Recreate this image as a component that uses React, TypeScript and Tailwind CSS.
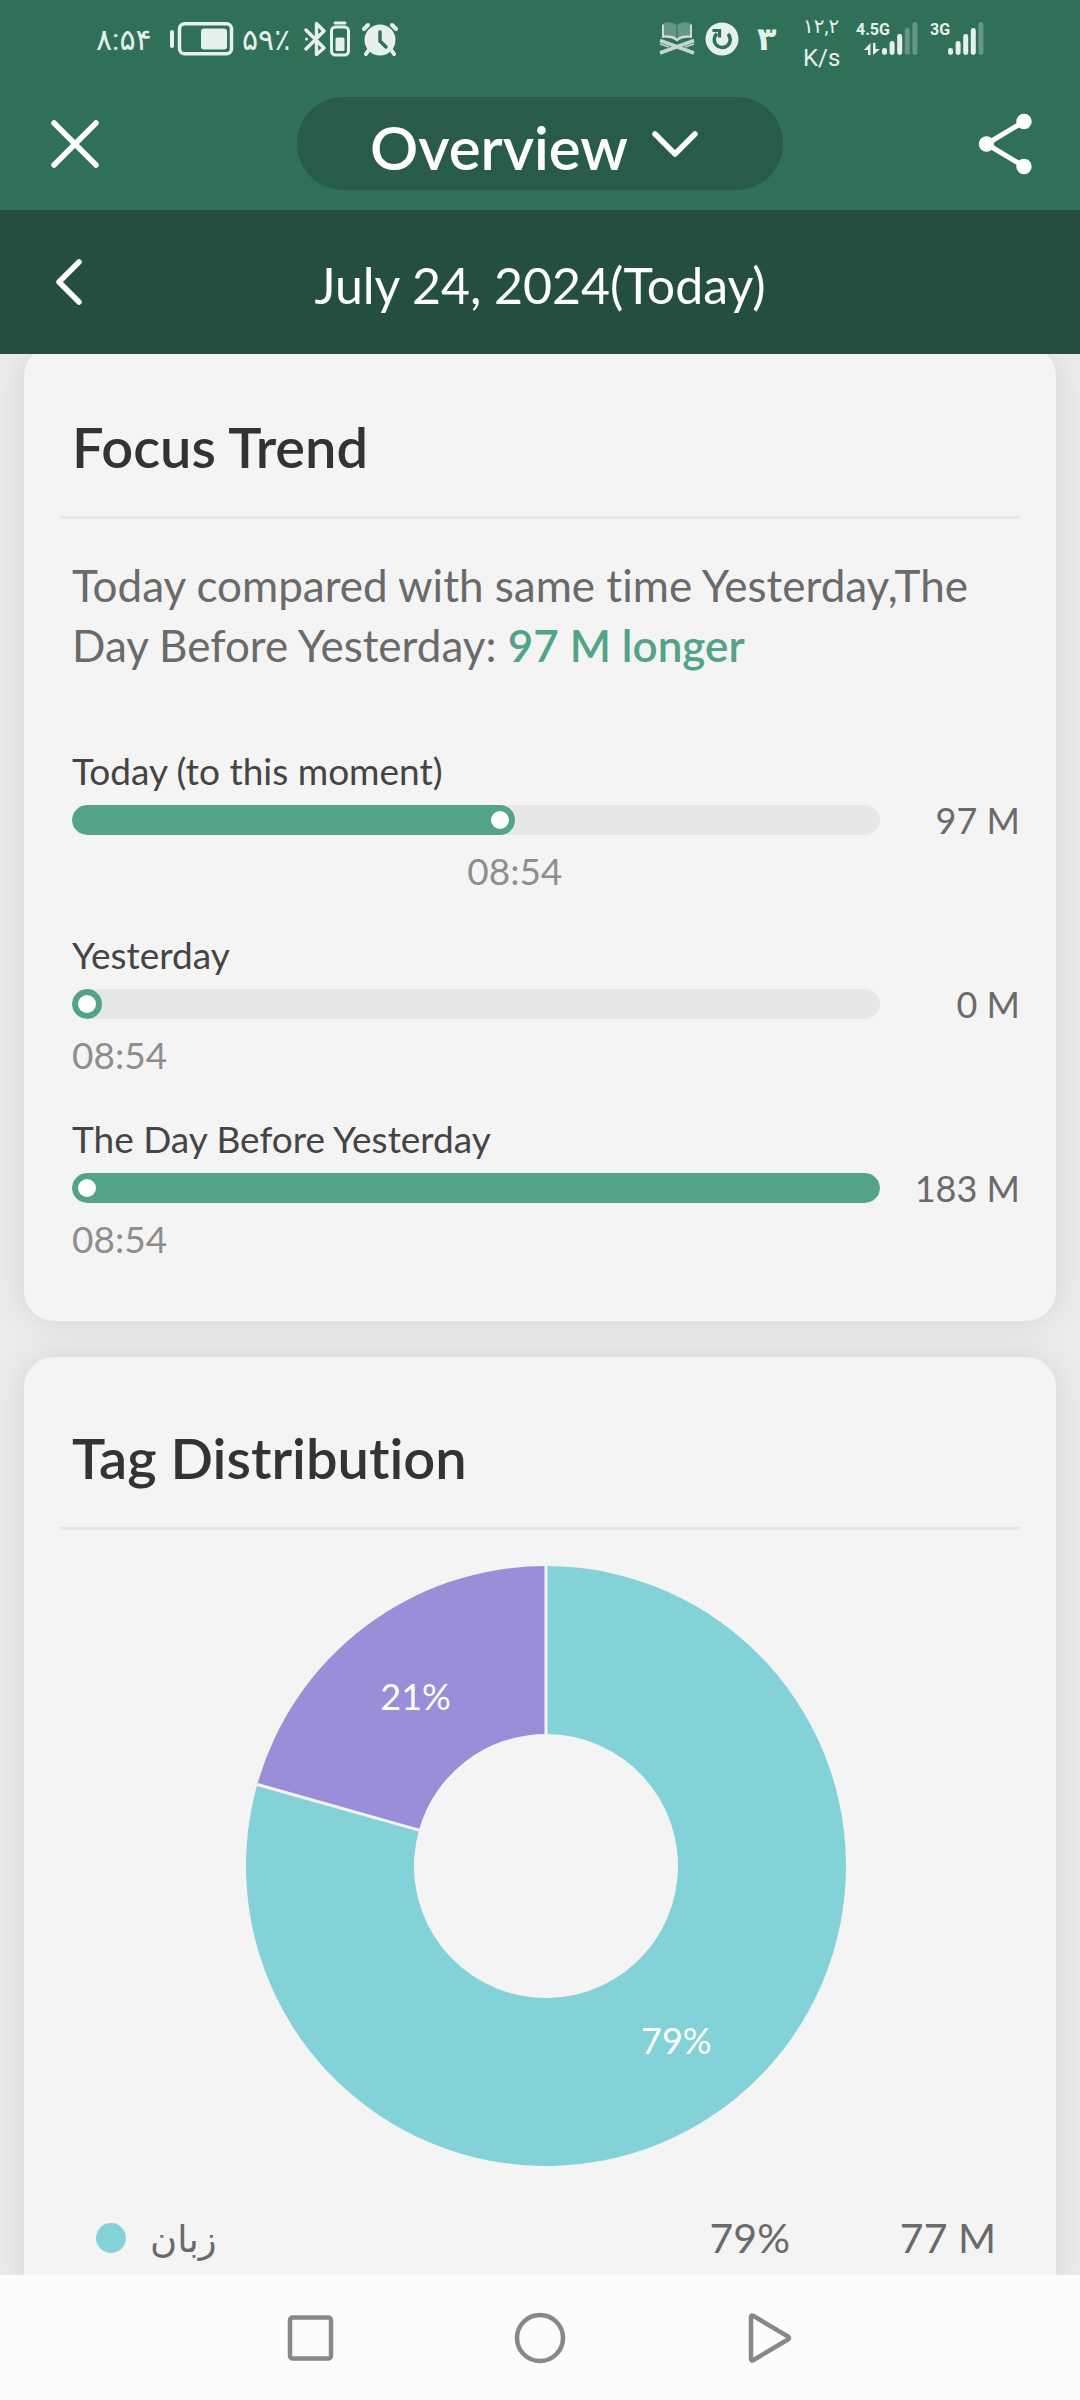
import type React from "react";
import { useState } from "react";

interface TrendRow {
  label: string;
  minutes: number;
  fill: number;
  marker: number;
}

interface Tag {
  name: string;
  minutes: number;
  color: string;
}

const trendRows: TrendRow[] = [
  { label: "Today (to this moment)", minutes: 97, fill: 54.8, marker: 54.8 },
  { label: "Yesterday", minutes: 0, fill: 0, marker: 0 },
  { label: "The Day Before Yesterday", minutes: 183, fill: 100, marker: 0 },
];

const tags: Tag[] = [
  { name: "زبان", minutes: 77, color: "#83d2d8" },
  { name: "", minutes: 20, color: "#9b8ed9" },
];

const totalMinutes = tags.reduce((sum, tag) => sum + tag.minutes, 0);

const percent = (minutes: number) =>
  `${Math.round((minutes / totalMinutes) * 100)}%`;

function SignalBars({ active }: { active: number }) {
  const tops = [26, 19, 12, 6, 0];
  return (
    <svg width="36" height="34" viewBox="0 0 36 34" fill="currentColor">
      {tops.map((top, i) => (
        <rect
          key={top}
          x={i * 7.6}
          y={top}
          width="5"
          height={33 - top}
          rx="2.4"
          opacity={i < active ? 1 : 0.3}
        />
      ))}
    </svg>
  );
}

function StatusBar() {
  return (
    <div className="flex h-[97px] items-start justify-between pl-24 pr-24 pt-4 font-['Roboto','DejaVu_Sans',sans-serif] text-[#e6f0ec]">
      <div className="flex h-[46px] items-center">
        <span className="w-[74px] text-[30px]">۸:۵۴</span>
        {/* Battery */}
        <svg width="64" height="34" viewBox="0 0 64 34" fill="currentColor">
          <rect x="0" y="8" width="4" height="18" rx="2" />
          <rect
            x="9.5"
            y="1.8"
            width="52"
            height="30"
            rx="5"
            fill="none"
            stroke="currentColor"
            strokeWidth="3.5"
          />
          <rect x="31" y="6.5" width="26" height="21" rx="3" />
        </svg>
        <span className="ml-2 w-[62px] text-[30px]">۵۹٪</span>
        {/* Bluetooth with device battery */}
        <svg width="48" height="36" viewBox="0 0 48 36" fill="none" stroke="currentColor">
          <path
            d="M2 28 20 10 12.5 2.5V16M12.5 20V33.5L20 27 2 9"
            strokeWidth="3.4"
            strokeLinejoin="round"
            strokeLinecap="round"
          />
          <circle cx="2.5" cy="18" r="1.5" fill="currentColor" stroke="none" />
          <rect x="27.5" y="6" width="17" height="28" rx="4" strokeWidth="3" />
          <path d="M31 2h10" strokeWidth="3" strokeLinecap="round" />
          <rect x="31.5" y="16.5" width="9" height="13.5" rx="1.5" fill="currentColor" stroke="none" />
        </svg>
        {/* Alarm */}
        <svg className="ml-2.5" width="36" height="34" viewBox="0 0 36 34" fill="none">
          <circle cx="18" cy="18" r="15.5" fill="currentColor" />
          <path
            d="M2 7 6 3M34 7 30 3M6 29l-2 3M30 29l2 3"
            stroke="currentColor"
            strokeWidth="4"
            strokeLinecap="round"
          />
          <path d="M18 10v9l6 6" stroke="#317058" strokeWidth="3.5" strokeLinecap="round" />
        </svg>
      </div>

      <div className="flex items-start">
        <div className="flex h-[46px] items-center">
          {/* Open book on a stand */}
          <svg width="36" height="34" viewBox="0 0 36 34" fill="currentColor">
            <path
              d="M5 1C10-.5 15 .5 17.5 3V16C14 13.5 9 13 5 13.5zM31 1C26-.5 21 .5 18.5 3V16C22 13.5 27 13 31 13.5z"
              opacity="0.3"
            />
            <path
              d="M3 2.5H5V13.5C10 13 15 13.5 18 16.5 21 13.5 26 13 31 13.5V2.5H33V16C27 15.5 22 16 18 19.5 14 16 9 15.5 3 16z"
              opacity="0.85"
            />
            <g stroke="currentColor" fill="none" opacity="0.8">
              <path d="M1 18.5 35 31M35 18.5 1 31" strokeWidth="3.5" />
              <path d="M1 22 10 25M35 22 26 25" strokeWidth="1.5" />
            </g>
          </svg>
          <svg className="ml-2.5" width="34" height="34" viewBox="0 0 34 34" fill="none">
            <circle cx="17" cy="17" r="16.5" fill="currentColor" />
            <path d="M12 11.5a8 8 0 1 0 11 .5" stroke="#317058" strokeWidth="3.6" />
            <path d="M7.5 8.5H14.5V15.5" stroke="#317058" strokeWidth="3.2" />
          </svg>
          <span className="ml-[18px] w-[46px] text-[32px] font-bold">۳</span>
        </div>
        <div className="-mt-1 flex w-[53px] flex-col text-[24px] leading-[36px]">
          <span className="text-[20px] leading-[28px]">۱۲,۲</span>
          <span>K/s</span>
        </div>
        <div className="relative mt-1.5 flex w-[62px] justify-end">
          <span className="absolute left-0 top-0 text-[16px] font-bold leading-4">4.5G</span>
          <svg
            className="absolute left-2 top-5"
            width="16"
            height="14"
            viewBox="0 0 16 14"
            fill="currentColor"
          >
            <path d="M4 13V8H0L6.5 1v12zM9 1h2.5v6H16L9 13z" />
          </svg>
          <SignalBars active={3} />
        </div>
        <div className="relative ml-3 mt-1.5 flex w-[54px] justify-end">
          <span className="absolute left-0 top-0 text-[16px] font-bold leading-4">3G</span>
          <SignalBars active={4} />
        </div>
      </div>
    </div>
  );
}

function Card({ title, children }: { title: string; children: React.ReactNode }) {
  return (
    <section className="rounded-[30px] bg-[#f4f4f4] pl-9 pr-9 pt-[66px] shadow-[0_0_36px_rgba(0,0,0,0.1)]">
      <h2 className="mb-[34px] pl-3 text-[56px] font-semibold leading-[70px] text-[#333333]">
        {title}
      </h2>
      <hr className="border-t-[3px] border-[#e7e7e7]" />
      <div className="pl-3 pt-9">{children}</div>
    </section>
  );
}

function TrendBar({ row }: { row: TrendRow }) {
  return (
    <li>
      <div className="text-[37px] leading-[44px] text-[#444444]">{row.label}</div>
      <div className="mt-3 flex">
        <div className="relative h-[30px] flex-1 overflow-hidden rounded-full bg-[#e7e7e7]">
          <div
            className="h-full min-w-[30px] rounded-full bg-[#52a388]"
            style={{ width: `${row.fill}%` }}
          />
          <span
            className="absolute top-1.5 size-[18px] rounded-full bg-white"
            style={{ left: `max(6px, calc(${row.marker}% - 24px))` }}
          />
        </div>
        <div className="w-[140px] text-right text-[36px] leading-[30px] text-[#6a6a6a]">
          {row.minutes} M
        </div>
      </div>
      <div className="mr-[140px] mt-3.5 flex text-[37px] leading-[44px] text-[#8e8e8e]">
        <span
          className={row.marker > 0 ? "-translate-x-1/2" : ""}
          style={{ marginLeft: `${row.marker}%` }}
        >
          08:54
        </span>
      </div>
    </li>
  );
}

function Donut() {
  const outer = 300;
  const inner = 132;
  const labelRadius = 216;

  const point = (angle: number, radius: number) =>
    `${300 + radius * Math.sin(angle)} ${300 - radius * Math.cos(angle)}`;

  let start = 0;
  const slices = tags.map((tag) => {
    const from = start;
    const to = from + (tag.minutes / totalMinutes) * Math.PI * 2;
    start = to;
    const large = to - from > Math.PI ? 1 : 0;
    return {
      ...tag,
      d: `M${point(from, outer)}A${outer} ${outer} 0 ${large} 1 ${point(to, outer)}L${point(to, inner)}A${inner} ${inner} 0 ${large} 0 ${point(from, inner)}Z`,
      edge: `M${point(from, inner)}L${point(from, outer)}`,
      x: 300 + labelRadius * Math.sin((from + to) / 2),
      y: 300 - labelRadius * Math.cos((from + to) / 2),
    };
  });

  return (
    <svg className="mx-auto w-[600px] max-w-full" viewBox="0 0 600 600" role="img" aria-label="Tag Distribution">
      {slices.map((slice) => (
        <path key={slice.color} d={slice.d} fill={slice.color} />
      ))}
      {slices.map((slice) => (
        <path key={slice.color} d={slice.edge} stroke="#f4f4f4" strokeWidth="3" />
      ))}
      {slices.map((slice) => (
        <text
          key={slice.color}
          x={slice.x}
          y={slice.y + 16}
          textAnchor="middle"
          className="fill-white text-[36px]"
        >
          {percent(slice.minutes)}
        </text>
      ))}
    </svg>
  );
}

export default function App() {
  const [menuOpen, setMenuOpen] = useState(false);

  return (
    <div className="flex h-screen flex-col overflow-hidden bg-[#ececec] font-['Lato','DejaVu_Sans',sans-serif] [font-variant-ligatures:no-common-ligatures]">
      <header className="relative z-10 shrink-0 text-white">
        <div className="bg-[#317058] pb-5">
          <StatusBar />
          <div className="flex items-center justify-between px-12">
            <button aria-label="Close">
              <svg width="54" height="54" viewBox="0 0 54 54" fill="none">
                <path
                  d="M6 6 48 48M48 6 6 48"
                  stroke="currentColor"
                  strokeWidth="5.5"
                  strokeLinecap="round"
                />
              </svg>
            </button>
            <button
              className="flex h-[93px] w-[486px] items-center justify-center gap-6 rounded-full bg-[#285b48] pr-3 text-[60px] font-semibold"
              aria-haspopup="menu"
              aria-expanded={menuOpen}
              onClick={() => setMenuOpen(!menuOpen)}
            >
              <span className="pt-1.5">Overview</span>
              <svg width="46" height="28" viewBox="0 0 46 28" fill="none">
                <path
                  d="M3 4 23 24 43 4"
                  stroke="currentColor"
                  strokeWidth="5.5"
                  strokeLinecap="round"
                  strokeLinejoin="round"
                />
              </svg>
            </button>
            <button aria-label="Share">
              <svg width="54" height="62" viewBox="0 0 54 62" fill="currentColor">
                <path d="M46 8.5 8.5 31 46 53.5" fill="none" stroke="currentColor" strokeWidth="5" />
                <circle cx="46" cy="8.5" r="7.7" />
                <circle cx="8.5" cy="31" r="7.7" />
                <circle cx="46" cy="53.5" r="7.7" />
              </svg>
            </button>
          </div>
        </div>

        <div className="flex h-36 items-center bg-[#244e3d] px-12">
          <button aria-label="Previous day" className="w-11">
            <svg width="44" height="54" viewBox="0 0 44 54" fill="none">
              <path
                d="M31 7 11 27 31 47"
                stroke="currentColor"
                strokeWidth="5.5"
                strokeLinecap="round"
                strokeLinejoin="round"
              />
            </svg>
          </button>
          <h1 className="mr-11 flex-1 pt-1.5 text-center text-[50px] leading-[60px]">
            July 24, 2024(Today)
          </h1>
        </div>
      </header>

      <main className="flex-1 overflow-hidden px-6">
        <div className="-mt-2 flex flex-col gap-9">
          <Card title="Focus Trend">
            <p className="text-[44px] leading-[60px] text-[#6a6a6a]">
              Today compared with same time Yesterday,The Day Before Yesterday:{" "}
              <span className="font-semibold text-[#52a388]">97 M longer</span>
            </p>
            <ul className="flex flex-col gap-10 pb-15 pt-[74px]">
              {trendRows.map((row) => (
                <TrendBar key={row.label} row={row} />
              ))}
            </ul>
          </Card>

          <Card title="Tag Distribution">
            <Donut />
            <div className="pb-9 pt-[42px]">
              <table className="w-full text-[41px] leading-[60px] text-[#6a6a6a]">
                <tbody>
                  {tags
                    .filter((tag) => tag.name)
                    .map((tag) => (
                      <tr key={tag.name}>
                        <td className="pl-6">
                          <div className="flex items-center gap-6">
                            <span
                              className="size-[30px] rounded-full"
                              style={{ backgroundColor: tag.color }}
                            />
                            <span className="text-[37px]">{tag.name}</span>
                          </div>
                        </td>
                        <td className="w-40 text-right">{percent(tag.minutes)}</td>
                        <td className="w-[230px] pr-6 text-right">{tag.minutes} M</td>
                      </tr>
                    ))}
                </tbody>
              </table>
            </div>
          </Card>
        </div>
      </main>

      <nav className="relative z-10 flex h-[125px] shrink-0 items-center justify-center gap-[178px] bg-[#fcfcfc] text-[#888888]">
        <button aria-label="Recent apps">
          <svg width="52" height="52" viewBox="0 0 52 52" fill="none" stroke="currentColor" strokeWidth="4.5">
            <rect x="6" y="5.5" width="41" height="41" rx="2.5" />
          </svg>
        </button>
        <button aria-label="Home">
          <svg width="52" height="52" viewBox="0 0 52 52" fill="none" stroke="currentColor" strokeWidth="4.5">
            <circle cx="26" cy="26" r="23" />
          </svg>
        </button>
        <button aria-label="Back">
          <svg width="52" height="52" viewBox="0 0 52 52" fill="none" stroke="currentColor" strokeWidth="4.5" strokeLinejoin="round">
            <path d="M7 5Q7 2.5 9.5 4L44 24.5Q46 26 44 27.5L9.5 48Q7 49.5 7 47Z" />
          </svg>
        </button>
      </nav>
    </div>
  );
}
